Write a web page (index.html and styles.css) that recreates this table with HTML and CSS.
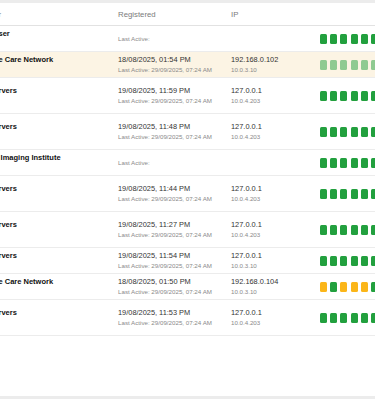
FILE: index.html
```html
<!DOCTYPE html>
<html lang="en">
<head>
    <meta charset="UTF-8">
    <meta name="viewport" content="width=device-width, initial-scale=1.0">
    <title>Devices</title>
    <link rel="stylesheet" href="styles.css">
</head>
<body>
    <div class="card">
        <div class="row head">
            <div class="who">r</div>
            <div>Registered</div>
            <div>IP</div>
            <div></div>
        </div>

        <div class="row">
            <div class="who"><div class="name">ser</div></div>
            <div class="reg"><div class="last">Last Active:</div></div>
            <div class="ip"></div>
            <div class="bars"><i></i><i></i><i></i><i></i><i></i><i></i><i></i><i></i></div>
        </div>

        <div class="row current">
            <div class="who"><div class="name">e Care Network</div></div>
            <div class="reg"><div class="date">18/08/2025, 01:54 PM</div><div class="last">Last Active: 29/09/2025, 07:24 AM</div></div>
            <div class="ip"><div class="addr">192.168.0.102</div><div class="local">10.0.3.10</div></div>
            <div class="bars faded"><i></i><i></i><i></i><i></i><i></i><i></i><i></i><i></i></div>
        </div>

        <div class="row tall">
            <div class="who"><div class="name">rvers</div></div>
            <div class="reg"><div class="date">19/08/2025, 11:59 PM</div><div class="last">Last Active: 29/09/2025, 07:24 AM</div></div>
            <div class="ip"><div class="addr">127.0.0.1</div><div class="local">10.0.4.203</div></div>
            <div class="bars"><i></i><i></i><i></i><i></i><i></i><i></i><i></i><i></i></div>
        </div>

        <div class="row tall">
            <div class="who"><div class="name">rvers</div></div>
            <div class="reg"><div class="date">19/08/2025, 11:48 PM</div><div class="last">Last Active: 29/09/2025, 07:24 AM</div></div>
            <div class="ip"><div class="addr">127.0.0.1</div><div class="local">10.0.4.203</div></div>
            <div class="bars"><i></i><i></i><i></i><i></i><i></i><i></i><i></i><i></i></div>
        </div>

        <div class="row">
            <div class="who"><div class="name">&nbsp;Imaging Institute</div></div>
            <div class="reg"><div class="last">Last Active:</div></div>
            <div class="ip"></div>
            <div class="bars"><i></i><i></i><i></i><i></i><i></i><i></i><i></i><i></i></div>
        </div>

        <div class="row tall">
            <div class="who"><div class="name">rvers</div></div>
            <div class="reg"><div class="date">19/08/2025, 11:44 PM</div><div class="last">Last Active: 29/09/2025, 07:24 AM</div></div>
            <div class="ip"><div class="addr">127.0.0.1</div><div class="local">10.0.4.203</div></div>
            <div class="bars"><i></i><i></i><i></i><i></i><i></i><i></i><i></i><i></i></div>
        </div>

        <div class="row tall">
            <div class="who"><div class="name">rvers</div></div>
            <div class="reg"><div class="date">19/08/2025, 11:27 PM</div><div class="last">Last Active: 29/09/2025, 07:24 AM</div></div>
            <div class="ip"><div class="addr">127.0.0.1</div><div class="local">10.0.4.203</div></div>
            <div class="bars"><i></i><i></i><i></i><i></i><i></i><i></i><i></i><i></i></div>
        </div>

        <div class="row">
            <div class="who"><div class="name">rvers</div></div>
            <div class="reg"><div class="date">19/08/2025, 11:54 PM</div><div class="last">Last Active: 29/09/2025, 07:24 AM</div></div>
            <div class="ip"><div class="addr">127.0.0.1</div><div class="local">10.0.3.10</div></div>
            <div class="bars"><i></i><i></i><i></i><i></i><i></i><i></i><i></i><i></i></div>
        </div>

        <div class="row">
            <div class="who"><div class="name">e Care Network</div></div>
            <div class="reg"><div class="date">18/08/2025, 01:50 PM</div><div class="last">Last Active: 29/09/2025, 07:24 AM</div></div>
            <div class="ip"><div class="addr">192.168.0.104</div><div class="local">10.0.3.10</div></div>
            <div class="bars"><i class="warn"></i><i></i><i class="warn"></i><i class="warn"></i><i class="warn"></i><i></i><i></i><i></i></div>
        </div>

        <div class="row tall">
            <div class="who"><div class="name">rvers</div></div>
            <div class="reg"><div class="date">19/08/2025, 11:53 PM</div><div class="last">Last Active: 29/09/2025, 07:24 AM</div></div>
            <div class="ip"><div class="addr">127.0.0.1</div><div class="local">10.0.4.203</div></div>
            <div class="bars"><i></i><i></i><i></i><i></i><i></i><i></i><i></i><i></i></div>
        </div>
    </div>
</body>
</html>
```

FILE: styles.css
```css
html, body {
    margin: 0;
    height: 100%;
    overflow: hidden;
}
body {
    font-family: "Liberation Sans", Arial, sans-serif;
    background-color: #ececec;
    padding-top: 3px;
    box-sizing: border-box;
}
.card {
    background: white;
    height: 393px;
    overflow: hidden;
}
.row {
    display: grid;
    grid-template-columns: 118px 113px 89px 1fr;
    align-items: center;
    height: 26px;
    box-sizing: border-box;
    border-bottom: 1px solid #ececec;
    white-space: nowrap;
}
.row.tall {
    height: 36px;
}
.row.current {
    background-color: #fcf4e4;
}
.row.head {
    height: 23px;
    border-bottom-color: #e2e2e2;
    font-size: 7.8px;
    color: #7b7b7b;
}
.who {
    margin-left: -1.5px;
}
.name {
    font-weight: bold;
    font-size: 7.5px;
    line-height: 9px;
    color: #111;
    margin-bottom: 10px;
}
.date, .addr {
    font-size: 7.4px;
    line-height: 9px;
    color: #333;
}
.last, .local {
    font-size: 6.2px;
    line-height: 8px;
    color: #8a8a8a;
}
.date + .last, .addr + .local {
    margin-top: 2px;
}
.bars {
    display: flex;
    gap: 3.2px;
    padding-top: 1px;
}
.bars i {
    display: block;
    flex: none;
    width: 7px;
    height: 10.5px;
    border-radius: 1.5px;
    background-color: #22a03e;
}
.bars i.warn {
    background-color: #fbb619;
}
.bars.faded i {
    opacity: 0.5;
}
```
